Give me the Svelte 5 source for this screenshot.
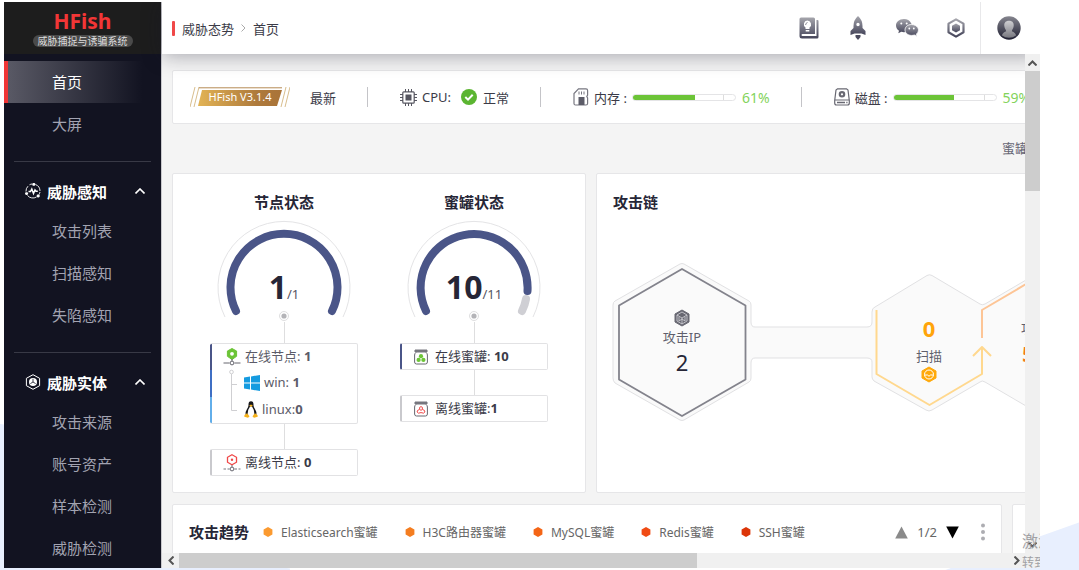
<script>
	const groups = [
		{ title: '威胁感知', icon: 'sense', items: ['攻击列表', '扫描感知', '失陷感知'] },
		{ title: '威胁实体', icon: 'entity', items: ['攻击来源', '账号资产', '样本检测', '威胁检测'] }
	];

	const usage = [
		{ id: 'memory', label: '内存', value: 61 },
		{ id: 'disk', label: '磁盘', value: 59 }
	];

	const legend = [
		{ name: 'Elasticsearch蜜罐', color: '#fb9a30' },
		{ name: 'H3C路由器蜜罐', color: '#f47d20' },
		{ name: 'MySQL蜜罐', color: '#f46516' },
		{ name: 'Redis蜜罐', color: '#f04b14' },
		{ name: 'SSH蜜罐', color: '#dc3508' }
	];
</script>

{#snippet gauge(value, total, rest)}
	<svg class="gauge" viewBox="0 0 140 102" role="img" aria-label="{value}/{total}">
		<path d="M11 97 A66 66 0 1 1 129 97" fill="none" stroke="#e4e4e6" />
		{#if rest}
			<path d="M122 79 Q121 85 118 91" class="arc rest" />
			<path d="M22 91 A53.5 53.5 0 1 1 123.5 71" class="arc" />
		{:else}
			<path d="M22 91 A53.5 53.5 0 1 1 118 91" class="arc" />
		{/if}
		<text x="70" y="79" text-anchor="middle" class="count">{value}<tspan class="total">/{total}</tspan></text>
		<circle cx="70" cy="96" r="4.5" fill="#fff" stroke="#dededf" />
		<circle cx="70" cy="96" r="2.6" fill="#b4b4b8" />
	</svg>
{/snippet}

{#snippet nodeIcon(online)}
	<svg width="18" height="18" viewBox="0 0 18 18" fill="none">
		{#if online}
			<path d="M9 0.5 L13.6 3 V8.3 L9 11.5 L4.4 8.3 V3Z" fill="#6cc437" stroke="#6cc437" stroke-linejoin="round" />
			<circle cx="9" cy="5.8" r="1.9" fill="#fff" />
			<path d="M9 11 V13 M0.5 15 H6.5 M11.5 15 H17.5" stroke="#66666f" />
		{:else}
			<path d="M9 0.8 L13.5 3.3 V8.2 L9 10.8 L4.5 8.2 V3.3Z" stroke="#f04848" stroke-width="1.3" />
			<circle cx="9" cy="5.8" r="1.2" fill="#f04848" />
			<path d="M9 11 V13 M0.5 15 H6.5 M11.5 15 H17.5" stroke="#77777f" stroke-dasharray="2.5 1.5" />
		{/if}
		<circle cx="9" cy="15" r="1.9" stroke="#66666f" />
	</svg>
{/snippet}

{#snippet potIcon(online)}
	<svg width="14" height="16" viewBox="0 0 14 16" fill="none">
		<path d="M1 1 H13 V3 H1Z" fill="#77777f" stroke="#77777f" />
		<path d="M2 3.5 Q0.6 4.5 0.6 6 V13 Q0.6 15 2.5 15 H11.5 Q13.4 15 13.4 13 V6 Q13.4 4.5 12 3.5" stroke="#66666f" />
		{#if online}
			<circle cx="7" cy="7.2" r="2.1" fill="#6cc437" />
			<circle cx="4.6" cy="10.9" r="2.1" fill="#6cc437" />
			<circle cx="9.4" cy="10.9" r="2.1" fill="#6cc437" />
		{:else}
			<path d="M5.6 8.5 Q5 5.6 7 5.6 Q9 5.6 8.4 8.5 Q11.2 9 10.9 11 Q10.2 13 7 11.6 Q3.8 13 3.1 11 Q2.8 9 5.6 8.5Z M7 8 V10" stroke="#f04848" />
		{/if}
	</svg>
{/snippet}

<div class="desktop">
	<div class="app">
		<aside>
			<div class="logo">
				<strong>HFish</strong>
				<span>威胁捕捉与诱骗系统</span>
			</div>
			<nav>
				<a href="#home" class="active">首页</a>
				<a href="#screen">大屏</a>
				{#each groups as group}
					<hr />
					<button class="group" aria-expanded="true">
						{#if group.icon === 'sense'}
							<svg width="16" height="16" viewBox="0 0 16 16" fill="none" stroke="#fff">
								<path d="M4.5 1.8 A7 7 0 0 1 7 1 M10.5 1.5 A7 7 0 0 1 15 8 M15 9 A7 7 0 0 1 14 11.5 M11.5 14 A7 7 0 0 1 2.5 12.5 M1 8.5 A7 7 0 0 1 3 3.2" stroke-width="0.9" />
								<path d="M3.5 8.5 H5.5 L6.8 6 L8.5 10.5 L10 7 L11 8.2 H12.8" stroke-width="1.5" />
								<path d="M8.6 1.4h.4 M1.4 10.6h.4 M13 13h.4" stroke-width="2.8" stroke-linecap="round" />
							</svg>
						{:else}
							<svg width="16" height="16" viewBox="0 0 16 16" fill="none" stroke="#fff">
								<path d="M8 0.7 L14.6 4.3 V11.7 L8 15.3 L1.4 11.7 V4.3Z" />
								<circle cx="8" cy="8" r="4" fill="#fff" stroke="none" />
								<path d="M8 4.8 V8 L5.4 9.6 M8 8 L10.6 9.6" stroke="#121321" stroke-width="0.8" />
							</svg>
						{/if}
						<b>{group.title}</b>
						<svg class="chevron" width="10" height="6" viewBox="0 0 10 6" fill="none" stroke="#fff" stroke-width="1.6">
							<path d="M0.5 5.5 L5 1 L9.5 5.5" />
						</svg>
					</button>
					{#each group.items as item}
						<a href="#{item}">{item}</a>
					{/each}
				{/each}
			</nav>
		</aside>

		<div class="main">
			<header>
				<svg width="0" height="0" class="defs" aria-hidden="true">
					<defs>
						<linearGradient id="metal" x1="0" y1="0" x2="0" y2="1">
							<stop offset="0" stop-color="#a5a5ac" />
							<stop offset="1" stop-color="#45455a" />
						</linearGradient>
						<linearGradient id="avatar" x1="0" y1="0" x2="0" y2="1">
							<stop offset="0" stop-color="#85858e" />
							<stop offset="1" stop-color="#1f1f32" />
						</linearGradient>
						<linearGradient id="person" x1="0" y1="0" x2="0" y2="1">
							<stop offset="0" stop-color="#cfcfd2" />
							<stop offset="1" stop-color="#77777f" />
						</linearGradient>
						<linearGradient id="gold" x1="0" y1="0" x2="1" y2="0">
							<stop offset="0" stop-color="#e2b355" />
							<stop offset="0.7" stop-color="#ae7a3c" />
							<stop offset="1" stop-color="#a97338" />
						</linearGradient>
					</defs>
				</svg>
				<div class="crumbs">
					<i></i>
					<a href="#threat">威胁态势</a>
					<svg width="5" height="8" viewBox="0 0 5 8" fill="none" stroke="#aaa"><path d="M0.5 0.5 L4 4 L0.5 7.5" /></svg>
					<span>首页</span>
				</div>
				<div class="tools">
					<button aria-label="手册">
						<svg width="20" height="22" viewBox="0 0 20 22">
							<path d="M2 0.5 H14.5 Q16 0.5 16 2 V17 H3.5 Q2.5 17 2.5 18 Q2.5 19 3.5 19 H17.5 V3 H18.5 Q19.5 3 19.5 4 V20 Q19.5 21.5 18 21.5 H3 Q0.5 21.5 0.5 19 V2 Q0.5 0.5 2 0.5Z" fill="url(#metal)" />
							<path d="M8.3 3.5 A3.8 3.8 0 0 1 10.5 10.4 V12 H6.5 V10.4 A3.8 3.8 0 0 1 8.3 3.5Z M6.7 13 H10.3 V14.5 H6.7Z" fill="#fff" />
							<path d="M6.6 8 Q6.6 6 8.5 5.5" stroke="#8b8b95" fill="none" />
						</svg>
					</button>
					<button aria-label="升级">
						<svg width="16" height="24" viewBox="0 0 16 24" fill="url(#metal)">
							<path fill-rule="evenodd" d="M8 0 Q12.5 4 12.5 10 V12 L15.5 15 V19 L11.5 17.5 H4.5 L0.5 19 V15 L3.5 12 V10 Q3.5 4 8 0Z M8 6.8 A1.7 1.7 0 1 0 8 10.2 A1.7 1.7 0 1 0 8 6.8Z" />
							<path d="M5.5 19 H10.5 V21 L8 24 L5.5 21Z" fill="#4a4a5d" />
						</svg>
					</button>
					<button aria-label="微信">
						<svg width="24" height="20" viewBox="0 0 24 20">
							<path d="M9 1 C4 1 1 4 1 7.5 C1 9.8 2.2 11.5 4 12.7 L3.3 15.3 L6.3 13.8 Q8.5 14.4 10.5 14 C17 13 18 8 16 5 Q14 1 9 1Z" fill="url(#metal)" />
							<path d="M16.5 6.5 C12.5 6.5 10 9 10 12 C10 15 12.8 17.4 16.5 17.4 Q18 17.4 19.5 17 L22 18.4 L21.3 16.2 C26 12 22.5 6.5 16.5 6.5Z" fill="url(#metal)" stroke="#fff" stroke-width="0.8" />
							<g fill="#fff"><circle cx="6.3" cy="5.5" r="1" /><circle cx="11.7" cy="5.5" r="1" /><circle cx="14.3" cy="10.5" r="0.9" /><circle cx="18.8" cy="10.5" r="0.9" /></g>
						</svg>
					</button>
					<button aria-label="设置">
						<svg width="18" height="20" viewBox="0 0 18 20">
							<path d="M9 1.4 L16.5 5.6 V14.3 L9 18.6 L1.5 14.3 V5.6Z" fill="none" stroke="url(#metal)" stroke-width="2.2" stroke-linejoin="round" />
							<path d="M9 5.5 L13 7.7 V12.3 L9 14.5 L5 12.3 V7.7Z" fill="url(#metal)" />
						</svg>
					</button>
					<button class="user" aria-label="用户">
						<svg width="24" height="24" viewBox="0 0 24 24">
							<circle cx="12" cy="12" r="11.7" fill="url(#avatar)" />
							<path d="M12 4.8 C15.5 4.8 17 7 16.7 10 C16.4 12.5 15 13.5 14.8 15.3 Q18.5 16.5 19 19.5 Q16 21.8 12 21.8 Q8 21.8 5 19.5 Q5.5 16.5 9.2 15.3 C9 13.5 7.6 12.5 7.3 10 C7 7 8.5 4.8 12 4.8Z" fill="url(#person)" />
						</svg>
					</button>
				</div>
			</header>

			<div class="scroller">
				<div class="viewport">
					<div class="content">
						<section class="card status">
							<div class="item">
								<span class="version">
									<svg viewBox="0 0 100 20" aria-hidden="true">
										<path d="M0 20 L5 0 M4 20 L9 0 M91 20 L96 0 M95 20 L100 0" stroke="#d8bd8c" fill="none" />
										<path d="M9 0.8 H92" stroke="#b58b55" />
										<path d="M12 3 H92 L87 19 H8Z" fill="url(#gold)" />
									</svg>
									<span>HFish V3.1.4</span>
								</span>
								<span>最新</span>
							</div>
							<div class="item">
								<svg width="17" height="17" viewBox="0 0 17 17" fill="none" stroke="#565660">
									<rect x="2.8" y="2.8" width="11.4" height="11.4" rx="1" stroke-width="1.2" />
									<rect x="6" y="6" width="5" height="5" fill="#565660" />
									<path d="M5.5 0 V3 M8.5 0 V3 M11.5 0 V3 M5.5 14 V17 M8.5 14 V17 M11.5 14 V17 M0 5.5 H3 M0 8.5 H3 M0 11.5 H3 M14 5.5 H17 M14 8.5 H17 M14 11.5 H17" />
								</svg>
								<span class="name">CPU:</span>
								<svg class="ok" width="16" height="16" viewBox="0 0 16 16">
									<circle cx="8" cy="8" r="8" fill="#5bb531" />
									<path d="M4.3 8 L7 10.6 L11.7 5.7" fill="none" stroke="#fff" stroke-width="2" />
								</svg>
								<span>正常</span>
							</div>
							{#each usage as u}
								<div class="item">
									{#if u.id === 'memory'}
										<svg width="16" height="18" viewBox="0 0 16 18" fill="none" stroke="#777780">
											<path d="M5.5 0.8 H13 Q14.6 0.8 14.6 2.5 V7 L13.8 8.5 L14.6 10 V15.5 Q14.6 17 13 17 H2.5 Q1 17 1 15.5 V5.5Z" stroke-width="1.2" />
											<path d="M5.5 9 H11.5 V17 H5.5Z" fill="#5c5c68" stroke="none" />
											<path d="M6 3.5 V6.5 M8.5 3.5 V6.5 M11 3.5 V6.5" />
										</svg>
									{:else}
										<svg width="16" height="18" viewBox="0 0 16 18" fill="none" stroke="#686872">
											<path d="M3.5 0.8 H12.5 L14 2 L15.3 12.5 V15 Q15.3 17 13.5 17 H2.5 Q0.7 17 0.7 15 V12.5 L2 2Z M1 12 H15" stroke-width="1.2" />
											<circle cx="8" cy="6.3" r="2.2" stroke-width="2.2" />
											<path d="M3 14.5 H11 M12.3 14.5 H13.5" stroke-width="1.4" />
										</svg>
									{/if}
									<span class="name">{u.label} :</span>
									<span class="bar"><i style="width: {u.value}%"></i></span>
									<span class="percent">{u.value}%</span>
								</div>
							{/each}
						</section>

						<div class="filters">蜜罐</div>

						<div class="row top">
							<section class="card states">
								<div class="state">
									<h2>节点状态</h2>
									{@render gauge(1, 1, false)}
									<div class="link"></div>
									<div class="box online split">
										<p>{@render nodeIcon(true)}<span>在线节点: <b>1</b></span></p>
										<div class="tree">
											<svg width="10" height="50" viewBox="0 0 10 50" fill="none" stroke="#cfcfd2">
												<path d="M3.5 5 V41.5 H9 M3.5 15.5 H9" />
												<circle cx="3.5" cy="3" r="1.8" />
											</svg>
											<div>
												<p>
													<svg width="16" height="16" viewBox="0 0 16 16" fill="#159be0">
														<path d="M0 2.6 L6 1.6 V7.4 H0Z M7 1.4 L16 0 V7.4 H7Z M0 8.6 H6 V14.4 L0 13.4Z M7 8.6 H16 V16 L7 14.6Z" />
													</svg>
													<span>win: <b>1</b></span>
												</p>
												<p>
													<svg width="14" height="17" viewBox="0 0 14 17">
														<path d="M7 0.3 Q4.2 0.3 4.5 4.5 Q4.4 6 2.8 8.5 Q1 11.5 1.8 14 H12.2 Q13 11.5 11.2 8.5 Q9.6 6 9.5 4.5 Q9.8 0.3 7 0.3Z" fill="#17171a" />
														<path d="M6 5.5 H8 Q10.8 9.5 10.4 13 Q9.5 15.5 7 15.5 Q4.5 15.5 3.6 13 Q3.2 9.5 6 5.5Z" fill="#fff" />
														<path d="M5.2 4.4 L7 3.5 L8.8 4.4 L7 5.9Z" fill="#f6b21b" />
														<path d="M0.5 14 L3 12.3 L5.5 15.3 Q4.8 17 3 16.6 L0.3 15.8Z M13.5 14 L11 12.3 L8.5 15.3 Q9.2 17 11 16.6 L13.7 15.8Z" fill="#f6b21b" />
													</svg>
													<span>linux:<b>0</b></span>
												</p>
											</div>
										</div>
									</div>
									<div class="link"></div>
									<div class="box"><p>{@render nodeIcon(false)}<span>离线节点: <b>0</b></span></p></div>
								</div>
								<div class="state">
									<h2>蜜罐状态</h2>
									{@render gauge(10, 11, true)}
									<div class="link"></div>
									<div class="box online pot"><p>{@render potIcon(true)}<span>在线蜜罐: <b>10</b></span></p></div>
									<div class="link"></div>
									<div class="box pot"><p>{@render potIcon(false)}<span>离线蜜罐:<b>1</b></span></p></div>
								</div>
							</section>

							<section class="card chain">
								<h2>攻击链</h2>
								<svg width="560" height="256" viewBox="0 0 560 256" fill="none">
									<path
										d="M71 50 L136 87 Q138 88 138 91 V108 Q138 113 142 113 H254 Q259 113 259 108 V98 Q259 94 262 93 L314 61.5 Q316.5 60 319 61.5 L367 90 Q369 91.5 372 90 L437 52 L505 90 V168 L437 206 L372 168 Q369 166 367 168 L319 196 Q316 198 313 196 L261 167 Q259 165 259 163 V148 Q259 144 254 144 H142 Q138 144 138 149 V164 Q138 167 136 168 L71 206 Q69 207 67 206 L2 169 Q0 167 0 164 V91 Q0 88 2 87 L67 50 Q69 49 71 50Z"
										fill="#fafafa"
										stroke="#e1e1e3"
									/>
									<path d="M69 55 L132.5 91.5 V165.5 L69 202 L6 165.5 V91.5Z" stroke="#83838c" stroke-width="1.8" stroke-linejoin="round" />
									<path d="M263.5 96 V160 L316.5 191 L369 160 V133 M360 142 L369 133 L378 142" stroke="#ffd88e" stroke-width="2" stroke-linejoin="round" />
									<path d="M369 124 V96 L437 56" stroke="#fdc596" stroke-width="2" stroke-linejoin="round" />

									<path d="M69 96 L76 100 V108 L69 112 L62 108 V100Z" fill="#686872" stroke="#686872" stroke-linejoin="round" />
									<path d="M69 98 L74 101 V107 L69 110 L64 107 V101Z M64 101 L69 104 L74 101 M69 104 V110 M66 103 V107 L69 105 L72 107 V103" stroke="#d5d5da" stroke-width="0.8" />
									<text x="69" y="128" text-anchor="middle" class="label">攻击IP</text>
									<text x="69" y="157" text-anchor="middle" class="num">2</text>

									<text x="316" y="123" text-anchor="middle" class="num scan">0</text>
									<text x="316" y="147" text-anchor="middle" class="label">扫描</text>
									<path d="M316 153 L323 157 V164 L316 168 L309 164 V157Z" fill="#ffa90a" stroke="#ffa90a" stroke-linejoin="round" />
									<circle cx="316" cy="160.5" r="4.5" stroke="#fff" />
									<path d="M311.5 161 H314.5 Q316 163.5 317.5 161 H320.5" stroke="#fff" />

									<text x="408" y="119" class="label">攻击</text>
									<text x="409" y="148" class="num attack">53</text>
								</svg>
							</section>
						</div>

						<div class="row bottom">
							<section class="card trend">
								<h2>攻击趋势</h2>
								<ul>
									{#each legend as l}
										<li>
											<svg width="10" height="10" viewBox="0 0 10 10" fill={l.color}><path d="M5 0 L9.4 2.5 V7.5 L5 10 L0.6 7.5 V2.5Z" /></svg>
											{l.name}
										</li>
									{/each}
								</ul>
								<div class="pager">
									<button aria-label="上一页"><svg width="13" height="13" viewBox="0 0 13 13"><path d="M6.5 0.5 L12.8 12.5 H0.2Z" fill="#8a8a8a" /></svg></button>
									<span>1/2</span>
									<button aria-label="下一页"><svg width="13" height="13" viewBox="0 0 13 13"><path d="M0.2 0.5 H12.8 L6.5 12.5Z" /></svg></button>
								</div>
								<button class="more" aria-label="更多">
									<svg width="4" height="18" viewBox="0 0 4 18" fill="#adadb2"><circle cx="2" cy="2.5" r="2" /><circle cx="2" cy="9" r="2" /><circle cx="2" cy="15.5" r="2" /></svg>
								</button>
							</section>
							<section class="card"></section>
						</div>
					</div>
				</div>
				<div class="track vertical">
					<button aria-label="向上"><svg width="9" height="6" viewBox="0 0 9 6"><path d="M0.5 5.5 L4.5 1.5 L8.5 5.5" /></svg></button>
					<div class="thumb"></div>
					<button class="end" aria-label="向下"><svg width="9" height="6" viewBox="0 0 9 6"><path d="M0.5 0.5 L4.5 4.5 L8.5 0.5" /></svg></button>
				</div>
				<div class="track horizontal">
					<button aria-label="向左"><svg width="6" height="9" viewBox="0 0 6 9"><path d="M5.5 0.5 L1.5 4.5 L5.5 8.5" /></svg></button>
					<div class="thumb"></div>
					<button class="end" aria-label="向右"><svg width="6" height="9" viewBox="0 0 6 9"><path d="M0.5 0.5 L4.5 4.5 L0.5 8.5" /></svg></button>
				</div>
				<div class="corner"></div>
			</div>
		</div>

		<div class="watermark">
			<p>激活</p>
			<small>转到</small>
		</div>
	</div>
</div>

<style>
	:global(body) {
		margin: 0;
	}

	.desktop {
		box-sizing: border-box;
		height: 100vh;
		padding: 2px 39px 2px 4px;
		background:
			linear-gradient(to bottom right, transparent 50%, #e8effe 51%) right bottom / 135px 48px no-repeat,
			linear-gradient(to top right, #e8effe 50%, transparent 51%) left bottom / 290px 146px no-repeat,
			#fff;
		font-family: 'Noto Sans', 'Noto Sans CJK SC', sans-serif;
		font-size: 13px;
		color: #3b3b48;
	}

	.app {
		position: relative;
		display: grid;
		grid-template: minmax(0, 1fr) / 157px minmax(0, 1fr);
		height: 100%;
		overflow: hidden;
	}

	button {
		display: flex;
		align-items: center;
		padding: 0;
		border: 0;
		background: none;
		font: inherit;
		color: inherit;
	}

	svg {
		display: block;
		flex: none;
	}

	h2 {
		margin: 0;
		font-size: 15px;
		line-height: 24px;
		color: #262636;
	}

	p {
		margin: 0;
	}

	/* sidebar */
	aside {
		background: #121321;
		overflow: hidden;
	}

	.logo {
		display: flex;
		flex-direction: column;
		align-items: center;
		box-sizing: border-box;
		height: 52px;
		padding-top: 5px;
		background: #1d1d1d;
	}

	.logo strong {
		font-size: 21px;
		line-height: 28px;
		color: #f23636;
	}

	.logo span {
		padding: 0 5px;
		border-radius: 6px;
		background: #4a4a4a;
		font-size: 10px;
		line-height: 12px;
		color: #ddd;
	}

	nav {
		padding-top: 7px;
	}

	nav a {
		display: block;
		padding-left: 44px;
		border-left: 4px solid transparent;
		font-size: 15px;
		line-height: 42px;
		color: #a2a3b1;
		text-decoration: none;
	}

	nav a.active {
		border-color: #f03535;
		background: linear-gradient(90deg, #595965, #121321 88%);
		color: #fff;
	}

	hr {
		height: 1px;
		margin: 16px 10px 10px;
		border: 0;
		background: #383946;
	}

	.group {
		gap: 6px;
		box-sizing: border-box;
		width: 100%;
		height: 38px;
		padding: 0 16px 0 21px;
		font-size: 15px;
		color: #fff;
	}

	.chevron {
		margin-left: auto;
	}

	/* top bar */
	.main {
		display: flex;
		flex-direction: column;
		min-width: 0;
		border-left: 1px solid #c8c8cc;
	}

	header {
		position: relative;
		z-index: 1;
		display: flex;
		justify-content: space-between;
		height: 52px;
		background: #fff;
		box-shadow: 0 2px 20px rgba(20, 20, 40, 0.35);
	}

	.defs {
		position: absolute;
	}

	.crumbs {
		display: flex;
		align-items: center;
		gap: 7px;
		padding-left: 10px;
	}

	.crumbs i {
		width: 3px;
		height: 15px;
		border-radius: 1px;
		background: #f04848;
	}

	.crumbs a {
		color: inherit;
		text-decoration: none;
	}

	.tools {
		display: flex;
	}

	.tools button {
		justify-content: center;
		width: 49px;
	}

	.tools .user {
		box-sizing: border-box;
		width: 60px;
		padding-right: 4px;
		border-left: 1px solid #e8e8ea;
	}

	/* scroll area */
	.scroller {
		flex: 1;
		min-height: 0;
		display: grid;
		grid-template: minmax(0, 1fr) 15px / minmax(0, 1fr) 15px;
	}

	.viewport {
		overflow: hidden;
		background: #f4f4f4;
	}

	.content {
		min-width: 1360px;
		padding: 16px 10px;
	}

	.track {
		z-index: 2;
		display: flex;
		align-items: center;
		background: #f0f0f0;
	}

	.track button {
		justify-content: center;
		width: 17px;
		height: 17px;
	}

	.track path {
		fill: none;
		stroke: #555;
		stroke-width: 2;
	}

	.track .end {
		margin-left: auto;
	}

	.vertical {
		flex-direction: column;
	}

	.vertical .end {
		margin: auto 0 0;
	}

	.thumb {
		background: #cdcdcd;
	}

	.vertical .thumb {
		width: 100%;
		height: 24%;
	}

	.horizontal .thumb {
		width: 60%;
		height: 100%;
	}

	.corner {
		background: #f0f0f0;
	}

	.card {
		border: 1px solid #e6e6e8;
		border-radius: 2px;
		background: #fff;
	}

	/* status line */
	.status {
		display: flex;
		align-items: center;
		height: 52px;
	}

	.item {
		display: flex;
		align-items: center;
		height: 20px;
		padding: 0 31px 0 32px;
		border-right: 1px solid #c4c4c8;
	}

	.item:first-child {
		gap: 20px;
		padding-left: 17px;
	}

	.item:last-child {
		border: 0;
	}

	.name {
		margin: 0 5px;
	}

	.ok {
		margin: 0 6px 0 5px;
	}

	.version {
		display: grid;
		align-items: center;
		width: 100px;
		font-size: 11px;
		line-height: 20px;
		color: #fff;
		text-align: center;
	}

	.version > * {
		grid-area: 1 / 1;
	}

	.bar {
		display: flex;
		box-sizing: border-box;
		width: 104px;
		height: 7px;
		border: 1px solid #e4e4e6;
		border-radius: 4px;
		background: linear-gradient(90deg, transparent 88%, #ddd 88%, #ddd 89%, transparent 89%);
		overflow: hidden;
	}

	.bar i {
		background: #6cc437;
	}

	.percent {
		margin-left: 6px;
		font-size: 14px;
		color: #83d35b;
	}

	.filters {
		padding-left: 830px;
		line-height: 49px;
		color: #666674;
	}

	.row {
		display: grid;
		gap: 10px;
	}

	.top {
		grid-template-columns: 414px 1fr;
	}

	.bottom {
		grid-template-columns: 830px 1fr;
		margin-top: 11px;
	}

	/* node and honeypot states */
	.states {
		display: flex;
		padding: 16px;
	}

	.state {
		display: flex;
		flex-direction: column;
		align-items: center;
		width: 190px;
	}

	.gauge {
		width: 140px;
		height: 102px;
		margin-top: 6px;
	}

	.arc {
		fill: none;
		stroke: #4a5588;
		stroke-width: 8;
		stroke-linecap: round;
	}

	.rest {
		stroke: #cfcfd4;
	}

	.count {
		font-size: 32px;
		font-weight: 700;
		fill: #262636;
	}

	.total {
		font-size: 13px;
		font-weight: 400;
		fill: #555562;
	}

	.link {
		width: 1px;
		height: 21px;
		background: #dededf;
	}

	.link ~ .link {
		height: 25px;
	}

	.box {
		box-sizing: border-box;
		width: 148px;
		border: 1px solid #e2e2e4;
		border-left: 2px solid #c9c9cd;
		border-radius: 2px;
	}

	.box.online {
		border-left-color: #4a5588;
	}

	.box.split {
		border-left: 0;
		padding-left: 2px;
		background: linear-gradient(#4a5588 33%, #3f6fc4 33%, #3f6fc4 67%, #62aeea 67%) left / 2px 100% no-repeat;
		color: #5b5b68;
	}

	.box p {
		display: flex;
		align-items: center;
		gap: 4px;
		padding-left: 11px;
		line-height: 25px;
	}

	.box.pot p {
		gap: 7px;
		padding-left: 12px;
	}

	.tree {
		display: flex;
		padding-left: 16px;
	}

	.tree p {
		padding-left: 6px;
		line-height: 27px;
	}

	/* attack chain */
	.chain {
		padding: 16px;
	}

	.chain svg {
		overflow: visible;
	}

	.label {
		font-size: 13px;
		fill: #5f5f6c;
	}

	.num {
		font-size: 22px;
		fill: #262636;
	}

	.scan {
		font-weight: 700;
		fill: #ffa40a;
	}

	.attack {
		font-weight: 700;
		fill: #f27a1a;
	}

	/* attack trend */
	.trend {
		display: flex;
		box-sizing: border-box;
		height: 320px;
		padding: 15px 16px;
	}

	.trend > * {
		height: 24px;
	}

	.trend ul {
		display: flex;
		gap: 27px;
		margin: 0 0 0 14px;
		padding: 0;
		list-style: none;
		font-size: 12px;
		color: #666;
	}

	.trend li {
		display: flex;
		align-items: center;
		gap: 8px;
	}

	.pager {
		display: flex;
		align-items: center;
		gap: 9px;
		margin: 0 22px 0 auto;
		color: #666;
	}

	/* activation notice over the window corner */
	.watermark {
		position: absolute;
		right: 0;
		bottom: -5px;
		z-index: 3;
		width: 18px;
		overflow: hidden;
		white-space: nowrap;
		color: #a0a0a4;
	}

	.watermark p {
		font-size: 16px;
		line-height: 24px;
	}

	.watermark small {
		display: block;
		font-size: 12px;
		line-height: 20px;
	}
</style>
